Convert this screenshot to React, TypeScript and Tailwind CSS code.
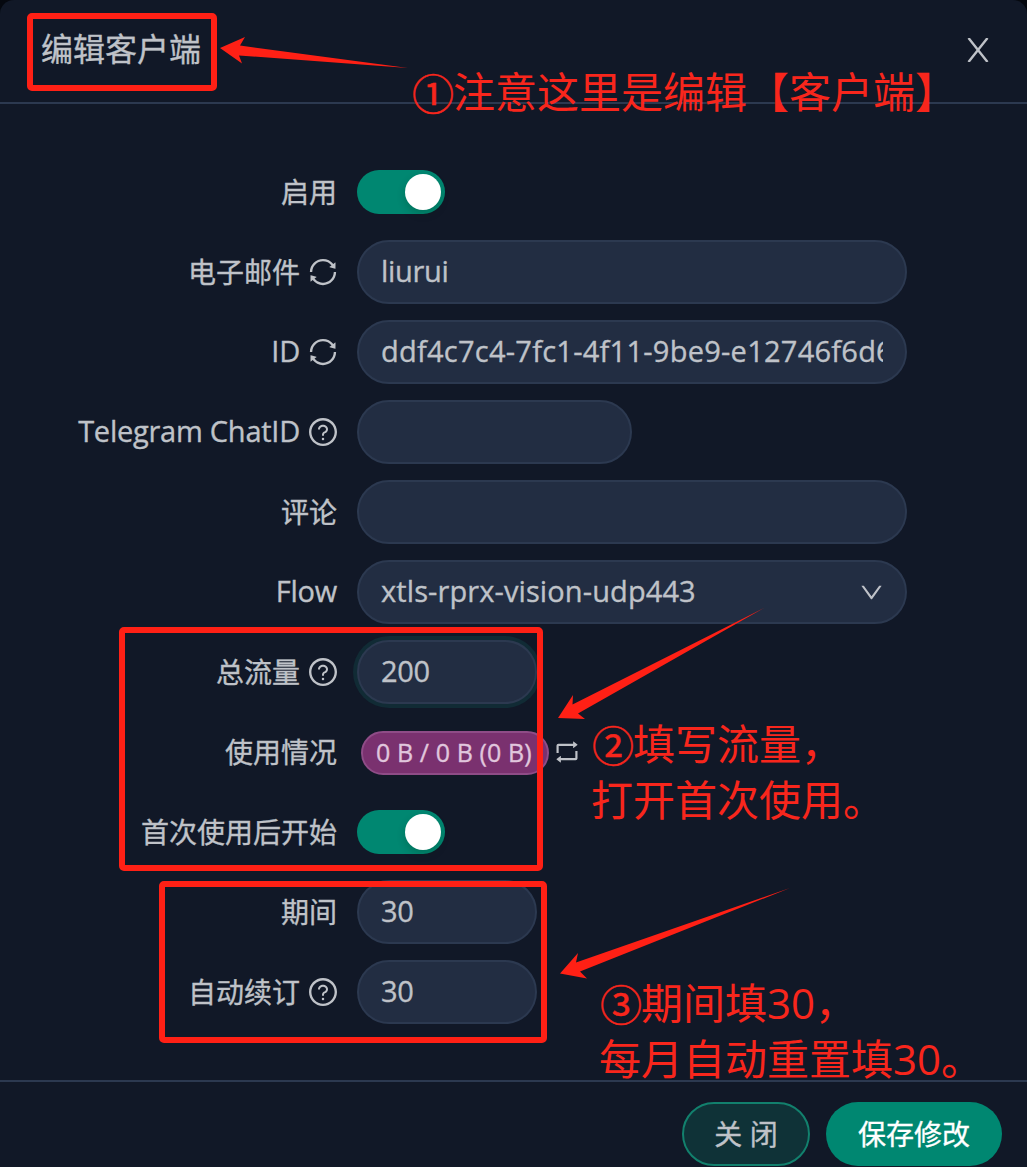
import type { ReactNode } from "react";
import {
  AiOutlineDown,
  AiOutlineQuestionCircle,
  AiOutlineRetweet,
  AiOutlineSync,
} from "react-icons/ai";

function Row({ label, icon, children }: { label: ReactNode; icon?: ReactNode; children: ReactNode }) {
  return (
    <div className="flex h-16 items-center">
      <div className="mr-5 flex w-[337px] shrink-0 items-center justify-end gap-[7px] whitespace-nowrap">
        <span>{label}</span>
        {icon}
      </div>
      {children}
    </div>
  );
}

function Latin({ children }: { children: ReactNode }) {
  return <span className="block pb-0.5 text-[29px] leading-10 tracking-[-0.25px]">{children}</span>;
}

function Field({ value = "", width, focused = false }: { value?: string; width: string; focused?: boolean }) {
  return (
    <div
      className={`h-16 rounded-full border-2 border-[#2c3950] bg-[#222d42] px-[22px] ${width} ${
        focused ? "shadow-[0_0_0_4px_#112b35]" : ""
      }`}
    >
      <div className="overflow-hidden text-[29px] leading-[58px] whitespace-nowrap">{value}</div>
    </div>
  );
}

function Toggle() {
  return (
    <div className="flex h-11 w-[88px] items-center justify-end rounded-full bg-[#008771] p-1">
      <div className="size-9 rounded-full bg-white shadow-[0_4px_8px_rgba(0,35,11,0.2)]" />
    </div>
  );
}

const sync = <AiOutlineSync className="-mr-0.5 size-8" />;
const question = <AiOutlineQuestionCircle className="-mr-0.5 size-8" />;

function Annotations() {
  return (
    <div className="pointer-events-none absolute inset-0 text-[42px] leading-[56px] whitespace-nowrap text-[#f8261c] [-webkit-text-stroke:0px]">
      <div className="absolute top-[13px] left-[27px] h-[78px] w-[190px] rounded-[5px] border-6 border-[#ff2015]" />
      <div className="absolute top-[627px] left-[119px] h-[244px] w-[424px] rounded-[5px] border-6 border-[#ff2015]" />
      <div className="absolute top-[881px] left-[159px] h-[162px] w-[388px] rounded-[5px] border-6 border-[#ff2015]" />
      <svg className="absolute inset-0" width="1027" height="1167" fill="#ff2015">
        <path d="M220 48 245 37 240 45.5 408 68 239 55.5 242 63.5Z" />
        <path d="M558 718 573 695 572.5 704.5 764 608 578 713.5 585 719Z" />
        <path d="M560 973.5 578 953 576 962.5 790 888 580 971.5 587 978.5Z" />
      </svg>
      <p className="absolute top-[64px] left-[411px]">
        <span className="relative top-0.5 left-px [-webkit-text-stroke:0.5px]">①</span>注意这里是编辑【客户端】
      </p>
      <p className="absolute top-[716px] left-[591px]">
        <span className="relative top-0.5 left-px [-webkit-text-stroke:0.5px]">②</span>填写流量，
        <br />
        打开首次使用。
      </p>
      <p className="absolute top-[975px] left-[599px]">
        <span className="relative top-0.5 left-px [-webkit-text-stroke:0.5px]">③</span>期间填30，
        <br />
        每月自动重置填30。
      </p>
    </div>
  );
}

export default function App() {
  return (
    <div className="h-[1167px] w-[1027px] overflow-hidden bg-[#05080f]">
      <div className="relative flex h-full flex-col rounded-t-[14px] bg-[#111827] font-['Open_Sans','Noto_Sans_CJK_SC',sans-serif] text-[28px] text-[#bfc2c8] [-webkit-text-stroke:0.35px]">
        <header className="flex h-[104px] shrink-0 items-center justify-between border-b-2 border-[#2c3950] pr-[38px] pb-1 pl-[41px]">
          <h1 className="text-[32px]">编辑客户端</h1>
          <svg className="mt-0.5" width="22" height="24" viewBox="0 0 22 24" fill="none" stroke="currentColor" strokeWidth="2.4">
            <path d="M1.5 0 20.5 24M20.5 0 1.5 24" />
          </svg>
        </header>

        <main className="flex flex-col gap-4 py-14">
          <Row label="启用">
            <Toggle />
          </Row>
          <Row label="电子邮件" icon={sync}>
            <Field width="w-[550px] tracking-[-0.3px]" value="liurui" />
          </Row>
          <Row label={<Latin>ID</Latin>} icon={sync}>
            <Field width="w-[550px] tracking-[0.25px]" value="ddf4c7c4-7fc1-4f11-9be9-e12746f6d6" />
          </Row>
          <Row label={<Latin>Telegram ChatID</Latin>} icon={question}>
            <Field width="w-[275px]" />
          </Row>
          <Row label="评论">
            <Field width="w-[550px]" />
          </Row>
          <Row label={<Latin>Flow</Latin>}>
            <div className="flex h-16 w-[550px] items-center justify-between rounded-full border-2 border-[#2c3950] bg-[#222d42] pr-[20px] pl-[22px]">
              <span className="pb-0.5 text-[29px] leading-10 tracking-[0.1px]">xtls-rprx-vision-udp443</span>
              <AiOutlineDown className="size-[27px]" />
            </div>
          </Row>
          <Row label="总流量" icon={question}>
            <Field width="w-[180px] tracking-[-0.3px]" value="200" focused />
          </Row>
          <Row label="使用情况">
            <div className="mt-0.5 ml-1 flex h-11 w-[188px] items-center rounded-full border-2 border-[#8f4c87] bg-[#7a316f] pl-[13px] text-[25px] tracking-[0.1px] whitespace-nowrap text-[#e0c6dd]">
              0 B / 0 B (0 B)
            </div>
            <AiOutlineRetweet className="ml-1 size-7" />
          </Row>
          <Row label="首次使用后开始">
            <Toggle />
          </Row>
          <Row label="期间">
            <Field width="w-[180px] tracking-[-0.3px]" value="30" />
          </Row>
          <Row label="自动续订" icon={question}>
            <Field width="w-[180px] tracking-[-0.3px]" value="30" />
          </Row>
        </main>

        <footer className="flex flex-1 justify-end gap-4 border-t-2 border-[#2c3950] px-[25px] pt-5">
          <button className="h-16 w-32 rounded-full border-2 border-[#12806d] bg-[#0f3237]">关 闭</button>
          <button className="h-16 w-44 rounded-full bg-[#008771] text-white">保存修改</button>
        </footer>

        <Annotations />
      </div>
    </div>
  );
}
